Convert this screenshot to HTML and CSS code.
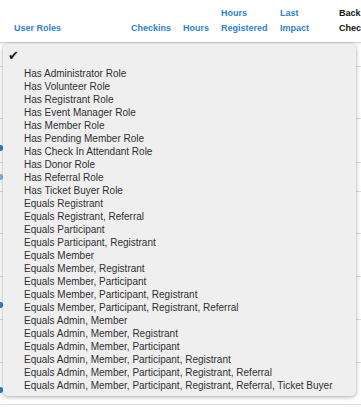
FILE: index.html
```html
<!DOCTYPE html>
<html lang="en">
<head>
    <meta charset="UTF-8">
    <title>User Roles</title>
    <link rel="stylesheet" href="styles.css">
</head>
<body>
    <div class="grid">
        <div class="head">
            <div class="col c1"><span class="link">User Roles</span></div>
            <div class="col c2"><span class="link">Checkins</span></div>
            <div class="col c3"><span class="link">Hours</span></div>
            <div class="col c4"><span class="link">Hours<br>Registered</span></div>
            <div class="col c5"><span class="link">Last<br>Impact</span></div>
            <div class="col c6"><span class="plain">Back<br>Chec</span></div>
        </div>
        <div class="row h24"></div>
        <div class="row h52"></div>
        <div class="row h44"><span class="dot d-low"></span></div>
        <div class="row h29"><span class="dot d-mid pale"></span></div>
        <div class="row h42"></div>
        <div class="row h43"></div>
        <div class="row h43"><span class="dot d-high"></span></div>
        <div class="row h43"></div>
        <div class="row h42"><span class="dot d-end"></span></div>
    </div>

    <div class="menu">
        <div class="check">&#10004;</div>
        <ul class="options">
            <li>Has Administrator Role</li>
            <li>Has Volunteer Role</li>
            <li>Has Registrant Role</li>
            <li>Has Event Manager Role</li>
            <li>Has Member Role</li>
            <li>Has Pending Member Role</li>
            <li>Has Check In Attendant Role</li>
            <li>Has Donor Role</li>
            <li>Has Referral Role</li>
            <li>Has Ticket Buyer Role</li>
            <li>Equals Registrant</li>
            <li>Equals Registrant, Referral</li>
            <li>Equals Participant</li>
            <li>Equals Participant, Registrant</li>
            <li>Equals Member</li>
            <li>Equals Member, Registrant</li>
            <li>Equals Member, Participant</li>
            <li>Equals Member, Participant, Registrant</li>
            <li>Equals Member, Participant, Registrant, Referral</li>
            <li>Equals Admin, Member</li>
            <li>Equals Admin, Member, Registrant</li>
            <li>Equals Admin, Member, Participant</li>
            <li>Equals Admin, Member, Participant, Registrant</li>
            <li>Equals Admin, Member, Participant, Registrant, Referral</li>
            <li>Equals Admin, Member, Participant, Registrant, Referral, Ticket Buyer</li>
        </ul>
    </div>
</body>
</html>
```
FILE: styles.css
```css
body {
    margin: 0;
    background-color: #fff;
    font-family: 'Liberation Sans', Arial, sans-serif;
    color: #333;
    overflow: hidden;
}
.grid {
    width: 361px;
}
.head {
    display: flex;
    align-items: flex-end;
    height: 43px;
    box-sizing: border-box;
    padding-bottom: 6px;
    border-bottom: 1px solid #d2d2d2;
    box-shadow: 0 1px 2px rgba(0, 0, 0, 0.08);
    font-size: 9px;
    font-weight: bold;
    line-height: 15px;
}
.col {
    flex: none;
}
.c1 { width: 117px; padding-left: 14px; }
.c2 { width: 52px; }
.c3 { width: 38px; }
.c4 { width: 59px; }
.c5 { width: 59px; }
.c6 { width: 40px; white-space: nowrap; }
.link {
    color: #2e7fce;
}
.plain {
    color: #111;
}
.row {
    display: flow-root;
    box-sizing: border-box;
    border-bottom: 1px solid #dcdcdc;
}
.h24 { height: 24px; }
.h52 { height: 52px; }
.h44 { height: 44px; }
.h29 { height: 29px; }
.h42 { height: 42px; }
.h43 { height: 43px; }
.dot {
    display: block;
    width: 5px;
    height: 6px;
    margin-left: -2px;
    border-radius: 50%;
    background-color: #2a7fcf;
}
.dot.pale {
    background-color: #7fb3e3;
}
.d-low { margin-top: 26px; }
.d-mid { margin-top: 11px; }
.d-high { margin-top: 25px; }
.d-end { margin-top: 24px; }

.menu {
    position: absolute;
    top: 44px;
    left: 3px;
    width: 353px;
    height: 352px;
    box-sizing: border-box;
    background-color: #efefef;
    border-radius: 5px;
    box-shadow: 0 1px 4px rgba(0, 0, 0, 0.35);
    padding-bottom: 5px;
}
.check {
    height: 23px;
    padding-left: 5px;
    font-family: 'DejaVu Sans', sans-serif;
    font-size: 13px;
    line-height: 24px;
    color: #1e1e1e;
}
.options {
    list-style: none;
    margin: 0;
    padding: 0 0 0 21px;
    font-size: 10px;
    line-height: 13px;
    color: #2f2f2f;
}
```
